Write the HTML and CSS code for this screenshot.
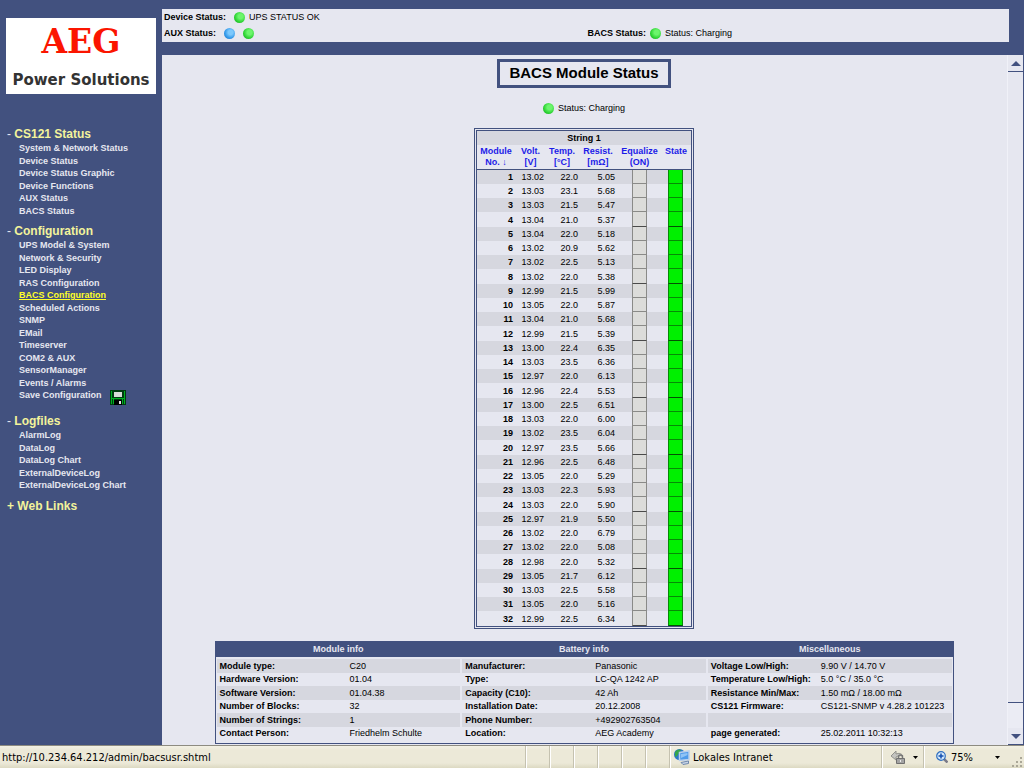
FILE: index.html
```html
<!DOCTYPE html>
<html lang="en">
<head>
<meta charset="utf-8">
<title>BACS Module Status</title>
<link rel="stylesheet" href="styles.css">
</head>
<body>
<div class="frames">
  <aside class="sidebar">
    <div class="logo"><span class="logo-name">AEG</span><span class="logo-sub">Power Solutions</span></div>
    <nav class="menu">
      <section>
        <h2><a href="#"><span class="sign">-</span> CS121 Status</a></h2>
        <ul>
          <li><a href="#">System &amp; Network Status</a></li>
          <li><a href="#">Device Status</a></li>
          <li><a href="#">Device Status Graphic</a></li>
          <li><a href="#">Device Functions</a></li>
          <li><a href="#">AUX Status</a></li>
          <li><a href="#">BACS Status</a></li>
        </ul>
      </section>
      <section>
        <h2><a href="#"><span class="sign">-</span> Configuration</a></h2>
        <ul>
          <li><a href="#">UPS Model &amp; System</a></li>
          <li><a href="#">Network &amp; Security</a></li>
          <li><a href="#">LED Display</a></li>
          <li><a href="#">RAS Configuration</a></li>
          <li><a href="#" class="current">BACS Configuration</a></li>
          <li><a href="#">Scheduled Actions</a></li>
          <li><a href="#">SNMP</a></li>
          <li><a href="#">EMail</a></li>
          <li><a href="#">Timeserver</a></li>
          <li><a href="#">COM2 &amp; AUX</a></li>
          <li><a href="#">SensorManager</a></li>
          <li><a href="#">Events / Alarms</a></li>
          <li class="save"><a href="#">Save Configuration</a>
            <svg class="disk" viewBox="0 0 16 15" aria-hidden="true"><path fill="#003c10" d="M0 0h16v15H0z"/><path fill="#00b020" d="M1 1h1v13H1zM14 1h1v13h-1zM2 8h12v1H2zM3 9h1v5H3zM12 9h1v5h-1z"/><path fill="#d8dcd8" d="M4 2h8v5H4z"/><path fill="#000" d="M4 10h8v5H4z"/><path fill="#e8e8e8" d="M9 11h2v3H9z"/></svg>
          </li>
        </ul>
      </section>
      <section>
        <h2><a href="#"><span class="sign">-</span> Logfiles</a></h2>
        <ul>
          <li><a href="#">AlarmLog</a></li>
          <li><a href="#">DataLog</a></li>
          <li><a href="#">DataLog Chart</a></li>
          <li><a href="#">ExternalDeviceLog</a></li>
          <li><a href="#">ExternalDeviceLog Chart</a></li>
        </ul>
      </section>
      <section>
        <h2><a href="#">+ Web Links</a></h2>
      </section>
    </nav>
  </aside>

  <div class="right">
    <header class="topbar">
      <div class="summary">
        <div class="status"><b>Device Status:</b><i class="lamp"></i><span>UPS STATUS OK</span></div>
        <div></div>
        <div class="status"><b>AUX Status:</b><i class="lamp blue"></i><i class="lamp second"></i></div>
        <div class="status bacs"><b>BACS Status:</b><i class="lamp near"></i><span>Status: Charging</span></div>
      </div>
    </header>

    <div class="viewport">
      <main class="content">
        <h1>BACS Module Status</h1>
        <div class="status charging"><i class="lamp"></i><span>Status: Charging</span></div>

        <table class="modules">
          <colgroup><col class="c-no"><col class="c-volt"><col class="c-temp"><col class="c-res"><col class="c-eq"><col class="c-state"></colgroup>
          <thead>
            <tr class="string"><th colspan="6">String 1</th></tr>
            <tr class="heads">
              <th><a href="#">Module<br>No. ↓</a></th><th><a href="#">Volt.<br>[V]</a></th><th><a href="#">Temp.<br>[°C]</a></th><th><a href="#">Resist.<br>[mΩ]</a></th><th><a href="#">Equalize<br>(ON)</a></th><th><a href="#">State</a></th>
            </tr>
          </thead>
          <tbody>
            <tr><th>1</th><td>13.02</td><td>22.0</td><td>5.05</td><td><i></i></td><td><i></i></td></tr>
            <tr><th>2</th><td>13.03</td><td>23.1</td><td>5.68</td><td><i></i></td><td><i></i></td></tr>
            <tr><th>3</th><td>13.03</td><td>21.5</td><td>5.47</td><td><i></i></td><td><i></i></td></tr>
            <tr><th>4</th><td>13.04</td><td>21.0</td><td>5.37</td><td><i></i></td><td><i></i></td></tr>
            <tr><th>5</th><td>13.04</td><td>22.0</td><td>5.18</td><td><i></i></td><td><i></i></td></tr>
            <tr><th>6</th><td>13.02</td><td>20.9</td><td>5.62</td><td><i></i></td><td><i></i></td></tr>
            <tr><th>7</th><td>13.02</td><td>22.5</td><td>5.13</td><td><i></i></td><td><i></i></td></tr>
            <tr><th>8</th><td>13.02</td><td>22.0</td><td>5.38</td><td><i></i></td><td><i></i></td></tr>
            <tr><th>9</th><td>12.99</td><td>21.5</td><td>5.99</td><td><i></i></td><td><i></i></td></tr>
            <tr><th>10</th><td>13.05</td><td>22.0</td><td>5.87</td><td><i></i></td><td><i></i></td></tr>
            <tr><th>11</th><td>13.04</td><td>21.0</td><td>5.68</td><td><i></i></td><td><i></i></td></tr>
            <tr><th>12</th><td>12.99</td><td>21.5</td><td>5.39</td><td><i></i></td><td><i></i></td></tr>
            <tr><th>13</th><td>13.00</td><td>22.4</td><td>6.35</td><td><i></i></td><td><i></i></td></tr>
            <tr><th>14</th><td>13.03</td><td>23.5</td><td>6.36</td><td><i></i></td><td><i></i></td></tr>
            <tr><th>15</th><td>12.97</td><td>22.0</td><td>6.13</td><td><i></i></td><td><i></i></td></tr>
            <tr><th>16</th><td>12.96</td><td>22.4</td><td>5.53</td><td><i></i></td><td><i></i></td></tr>
            <tr><th>17</th><td>13.00</td><td>22.5</td><td>6.51</td><td><i></i></td><td><i></i></td></tr>
            <tr><th>18</th><td>13.03</td><td>22.0</td><td>6.00</td><td><i></i></td><td><i></i></td></tr>
            <tr><th>19</th><td>13.02</td><td>23.5</td><td>6.04</td><td><i></i></td><td><i></i></td></tr>
            <tr><th>20</th><td>12.97</td><td>23.5</td><td>5.66</td><td><i></i></td><td><i></i></td></tr>
            <tr><th>21</th><td>12.96</td><td>22.5</td><td>6.48</td><td><i></i></td><td><i></i></td></tr>
            <tr><th>22</th><td>13.05</td><td>22.0</td><td>5.29</td><td><i></i></td><td><i></i></td></tr>
            <tr><th>23</th><td>13.03</td><td>22.3</td><td>5.93</td><td><i></i></td><td><i></i></td></tr>
            <tr><th>24</th><td>13.03</td><td>22.0</td><td>5.90</td><td><i></i></td><td><i></i></td></tr>
            <tr><th>25</th><td>12.97</td><td>21.9</td><td>5.50</td><td><i></i></td><td><i></i></td></tr>
            <tr><th>26</th><td>13.02</td><td>22.0</td><td>6.79</td><td><i></i></td><td><i></i></td></tr>
            <tr><th>27</th><td>13.02</td><td>22.0</td><td>5.08</td><td><i></i></td><td><i></i></td></tr>
            <tr><th>28</th><td>12.98</td><td>22.0</td><td>5.32</td><td><i></i></td><td><i></i></td></tr>
            <tr><th>29</th><td>13.05</td><td>21.7</td><td>6.12</td><td><i></i></td><td><i></i></td></tr>
            <tr><th>30</th><td>13.03</td><td>22.5</td><td>5.58</td><td><i></i></td><td><i></i></td></tr>
            <tr><th>31</th><td>13.05</td><td>22.0</td><td>5.16</td><td><i></i></td><td><i></i></td></tr>
            <tr><th>32</th><td>12.99</td><td>22.5</td><td>6.34</td><td><i></i></td><td><i></i></td></tr>
          </tbody>
        </table>

        <div class="info">
          <table>
            <caption>Module info</caption>
            <tbody>
              <tr><th>Module type:</th><td>C20</td></tr>
              <tr><th>Hardware Version:</th><td>01.04</td></tr>
              <tr><th>Software Version:</th><td>01.04.38</td></tr>
              <tr><th>Number of Blocks:</th><td>32</td></tr>
              <tr><th>Number of Strings:</th><td>1</td></tr>
              <tr><th>Contact Person:</th><td>Friedhelm Schulte</td></tr>
            </tbody>
          </table>
          <table>
            <caption>Battery info</caption>
            <tbody>
              <tr><th>Manufacturer:</th><td>Panasonic</td></tr>
              <tr><th>Type:</th><td>LC-QA 1242 AP</td></tr>
              <tr><th>Capacity (C10):</th><td>42 Ah</td></tr>
              <tr><th>Installation Date:</th><td>20.12.2008</td></tr>
              <tr><th>Phone Number:</th><td>+492902763504</td></tr>
              <tr><th>Location:</th><td>AEG Academy</td></tr>
            </tbody>
          </table>
          <table class="misc">
            <caption>Miscellaneous</caption>
            <tbody>
              <tr><th>Voltage Low/High:</th><td>9.90 V / 14.70 V</td></tr>
              <tr><th>Temperature Low/High:</th><td>5.0 °C / 35.0 °C</td></tr>
              <tr><th>Resistance Min/Max:</th><td>1.50 mΩ / 18.00 mΩ</td></tr>
              <tr><th>CS121 Firmware:</th><td>CS121-SNMP v 4.28.2 101223</td></tr>
              <tr><th></th><td></td></tr>
              <tr><th>page generated:</th><td>25.02.2011 10:32:13</td></tr>
            </tbody>
          </table>
        </div>
      </main>
      <div class="scrollbar">
        <button type="button" aria-label="Scroll up"><svg viewBox="0 0 10 5"><path d="M5 0l5 5H0z"/></svg></button>
        <div class="thumb"></div>
        <div class="track"></div>
        <button type="button" aria-label="Scroll down"><svg viewBox="0 0 10 5"><path d="M0 0h10L5 5z"/></svg></button>
      </div>
    </div>
  </div>
</div>

<footer class="statusbar">
  <span class="url">http://10.234.64.212/admin/bacsusr.shtml</span>
  <span class="pane"></span><span class="pane"></span><span class="pane"></span><span class="pane"></span><span class="pane"></span><span class="pane"></span>
  <span class="pane zone">
    <svg class="ic-zone" viewBox="0 0 16 16" aria-hidden="true"><circle cx="5.500" cy="5.500" r="5.500" fill="#2b78c8"/><path fill="#35a54a" d="M1 3c2-3 5-3 6-2L5 4 3 7 1 8z"/><path fill="#4f9bea" stroke="#b9cfec" stroke-width="1.500" d="M5.500 3.500l9.500-1.500v8.500l-9.500 1z"/><path fill="#8fc3f6" d="M7 5l6.500-1v2L7 9z"/><path fill="#c9d6e8" stroke="#6f88ad" d="M7 13.500l7.500-1.500v2.500l-5.500 1z"/></svg>
    Lokales Intranet
  </span>
  <button type="button" class="pane lock" aria-label="Protected mode">
    <svg class="ic-lock" viewBox="0 0 16 16" aria-hidden="true"><path fill="#c4c4c0" stroke="#92928c" d="M1 7l5-5v3c3-1 5-1 7 2-3-1-5 0-7 1v3z"/><path fill="none" stroke="#777" stroke-width="1.500" d="M8.500 10V8a2 2 0 014 0v2"/><path fill="#a4a4a4" stroke="#707070" d="M6.500 9.500h8v5h-8z"/><path fill="#eee" d="M10 11h1v2h-1z"/></svg>
    <svg class="caret" viewBox="0 0 5 3" aria-hidden="true"><path d="M0 0h5L2.500 3z"/></svg>
  </button>
  <button type="button" class="pane zoom">
    <svg class="ic-zoom" viewBox="0 0 12 12" aria-hidden="true"><path stroke="#7a7a88" stroke-width="2.500" d="M7.500 7.500l4 4"/><circle cx="5" cy="5" r="4.300" fill="#d4e8fb" stroke="#2f6fc0" stroke-width="1.200"/><path stroke="#1450b0" stroke-width="1.500" d="M2.500 5h5M5 2.500v5"/></svg>
    <span>75%</span>
    <svg class="caret" viewBox="0 0 5 3" aria-hidden="true"><path d="M0 0h5L2.500 3z"/></svg>
  </button>
  <svg class="grip" viewBox="0 0 12 12" aria-hidden="true"><path fill="#aaa797" d="M9 1h2v2H9zM5 5h2v2H5zM9 5h2v2H9zM1 9h2v2H1zM5 9h2v2H5zM9 9h2v2H9z"/></svg>
</footer>
</body>
</html>
```

FILE: styles.css
```css
* { box-sizing: border-box; }

body {
  margin: 0;
  height: 100vh;
  display: flex;
  flex-direction: column;
  overflow: hidden;
  background: #42517f;
  color: #000;
  font: 9px/12px "Liberation Sans", Arial, sans-serif;
}

a { color: inherit; text-decoration: none; }
button { border: 0; padding: 0; margin: 0; background: none; font: inherit; color: inherit; }
ul { list-style: none; margin: 0; padding: 0; }
svg { display: block; flex: none; }

.frames { flex: 1; min-height: 0; display: flex; }

/* Sidebar */
.sidebar { width: 162px; flex: none; padding: 18px 6px 0; }

.logo {
  display: flex;
  flex-direction: column;
  align-items: center;
  height: 76px;
  padding-top: 6px;
  background: #fff;
}
.logo-name { font: bold 33px/36px "DejaVu Serif", serif; color: #fb1500; }
.logo-sub { margin-top: 10px; font: bold 15px/20px "DejaVu Sans", sans-serif; color: #333; white-space: nowrap; }

.menu {
  display: flex;
  flex-direction: column;
  gap: 6px;
  padding: 32px 0 0 1px;
  font-weight: bold;
  white-space: nowrap;
}
.menu h2 { margin: 0; font-size: 12px; line-height: 16px; color: #f3f39b; }
.sign { color: #e6e7f0; font-weight: normal; }
.menu ul { padding-left: 12px; color: #e6e7f0; }
.menu li { line-height: 12px; height: 12px; }
.menu li:nth-child(odd) { height: 13px; }
.menu .current { color: #ffff28; text-decoration: underline; }
.menu li.save { display: flex; gap: 8px; height: 18px; }
.disk { width: 16px; height: 15px; margin-top: 1px; }

/* Top frame */
.right { flex: 1; min-width: 0; display: flex; flex-direction: column; }
.topbar { padding: 9px 15px 13px 0; }
.summary {
  display: grid;
  grid-template-columns: 1fr 1fr;
  padding: 0 2px 1px;
  background: #e6e7f0;
}
.status { display: flex; align-items: center; height: 16px; }
.status.bacs { padding-left: 2px; }
.lamp {
  width: 11px;
  height: 11px;
  margin: 0 4px 0 8px;
  border-radius: 50%;
  background: radial-gradient(circle at 60% 40%, #6cf56c 25%, #2ed435 60%, #149b1c);
}
.lamp.blue { background: radial-gradient(circle at 60% 40%, #7cc8fc 25%, #3399ea 60%, #1c6ab8); }
.lamp.second, .lamp.near { margin-left: 4px; }

/* Main frame */
.viewport { flex: 1; min-height: 0; display: flex; background: #e6e7f0; }
.content {
  flex: 1;
  min-width: 0;
  display: flex;
  flex-direction: column;
  align-items: center;
  padding: 4px 1px 0 0;
  overflow: hidden;
}
h1 {
  margin: 0 0 12px;
  padding: 1px 9px 2px;
  border: 3px solid #42517f;
  font-size: 15px;
  line-height: 20px;
}
.charging { margin-bottom: 12px; }
.charging .lamp { margin-left: 0; }

.modules {
  flex: none;
  border: 3px double #42517f;
  border-collapse: separate;
  border-spacing: 0;
  table-layout: fixed;
  width: 220px;
}
.c-no { width: 38px; }
.c-volt { width: 31px; }
.c-temp { width: 32px; }
.c-res { width: 40px; }
.c-eq { width: 43px; }
.c-state { width: 30px; }
.modules th, .modules td { padding: 0; }
.string th { height: 14px; background: #d6d7df; }
.heads th {
  height: 25px;
  padding-top: 1px;
  border-bottom: 1px solid #42517f;
  vertical-align: top;
  line-height: 11px;
  color: #1c1ce8;
}
.modules tbody tr { height: 14px; line-height: 14px; text-align: right; }
.modules tbody tr:nth-child(4n) { height: 15px; }
.modules tbody tr:nth-child(odd) { background: #d6d7df; }
.modules tbody th { text-align: right; padding-right: 2px; }
.modules tbody td:nth-child(2) { padding-right: 2px; }
.modules tbody td:nth-child(4) { padding-right: 3px; }
.modules i {
  display: block;
  width: 15px;
  height: 14px;
  margin: 0 auto;
  border: solid #8a8a88;
  border-width: 0 1px 1px;
  background: #dcdcda;
}
.modules tr:nth-child(4n) i { height: 15px; border-bottom-color: #4a4a4a; }
.modules td:last-child i { background: #00f000; border-color: #068a06; }
.modules tr:nth-child(4n) td:last-child i { border-bottom-color: #045004; }

.info {
  flex: none;
  display: grid;
  grid-template-columns: 1fr 1fr 1fr;
  width: 88%;
  max-width: 739px;
  margin-top: 12px;
  border: 1px solid #42517f;
  border-top: 0;
  padding-bottom: 3px;
}
.info table { width: 100%; border-spacing: 0; table-layout: fixed; }
.info caption {
  height: 16px;
  margin-bottom: 2px;
  line-height: 16px;
  background: #42517f;
  color: #e6e7f0;
  font-weight: bold;
}
.info tr { height: 13px; line-height: 13px; }
.info tr:nth-child(odd) { height: 14px; background: #d6d7df; }
.info th, .info td { padding: 0; text-align: left; white-space: nowrap; }
.info th { width: 134px; padding-left: 3px; border-left: 1px solid #e6e7f0; }
.info td { border-right: 1px solid #e6e7f0; }
.info .misc th { width: 114px; }

/* Scrollbar */
.scrollbar {
  width: 17px;
  flex: none;
  display: flex;
  flex-direction: column;
  border-left: 1px solid #f0f1f8;
  border-right: 1px solid #42517f;
}
.scrollbar button {
  display: flex;
  align-items: center;
  justify-content: center;
  height: 17px;
  border-bottom: 1px solid #42517f;
}
.scrollbar svg { width: 10px; height: 5px; fill: #42517f; }
.thumb { flex: 25; border-bottom: 1px solid #42517f; }
.track { flex: 1; background: #ebecf4; }

/* Browser status bar */
.statusbar {
  flex: none;
  display: flex;
  height: 23px;
  padding-right: 1px;
  border-top: 1px solid #8d8b80;
  background: linear-gradient(#f3f1e4, #ece9d8 4px, #ece9d8 17px, #dcd9c2);
  font: 11px/23px "DejaVu Sans Condensed", Tahoma, sans-serif;
  white-space: nowrap;
}
.url { flex: 1; padding-left: 2px; }
.pane {
  display: flex;
  align-items: center;
  width: 24px;
  border-left: 1px solid #c5c2b0;
  box-shadow: inset 1px 0 #fff;
}
.zone { width: 212px; padding-left: 4px; gap: 3px; }
.ic-zone { width: 16px; height: 16px; }
.lock { width: 42px; padding-left: 8px; gap: 7px; }
.ic-lock { width: 16px; height: 16px; }
.caret { width: 5px; height: 3px; }
.zoom { width: 88px; padding-left: 12px; gap: 3px; }
.zoom .caret { margin-left: auto; margin-right: 11px; }
.ic-zoom { width: 12px; height: 12px; }
.grip { width: 12px; height: 12px; align-self: flex-end; }
```
